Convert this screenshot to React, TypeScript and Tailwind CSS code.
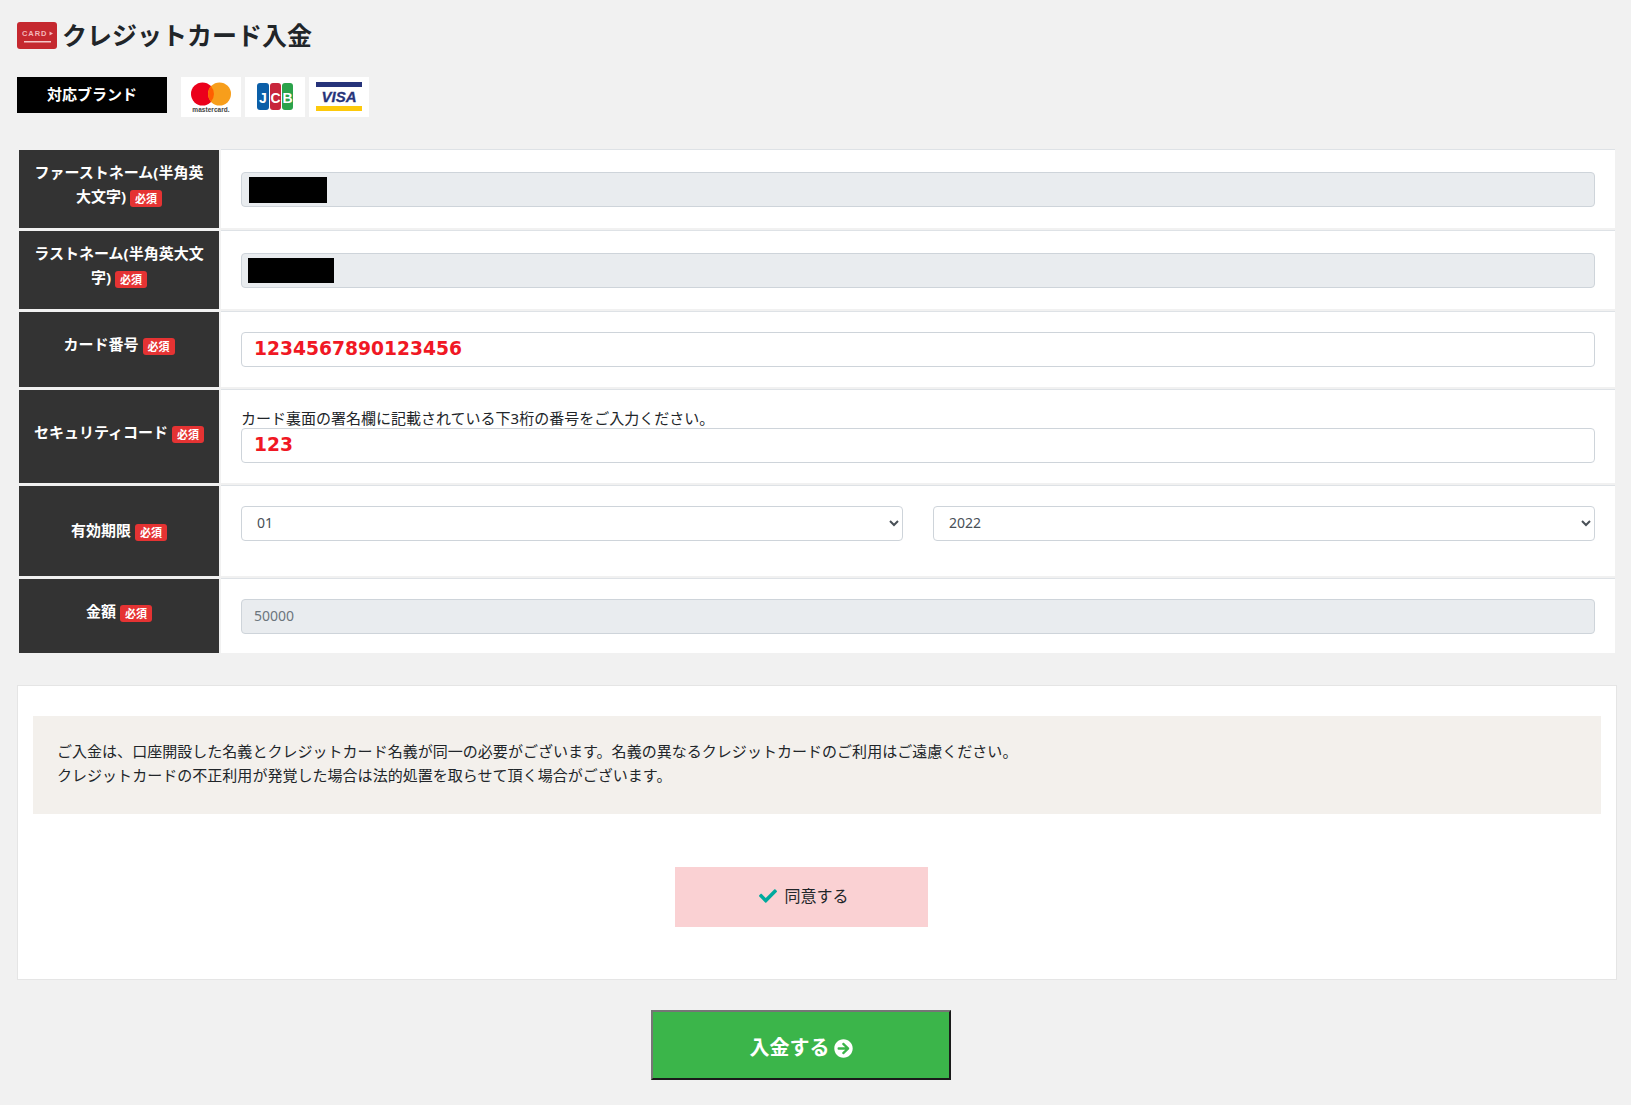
import React from "react";
import { FaCheck, FaArrowCircleRight } from "react-icons/fa";

const font = "font-['Noto_Sans','Noto_Sans_CJK_JP',sans-serif]";

function Badge() {
  return (
    <span className="relative top-[1px] ml-[4px] inline-block h-[17px] w-[32px] rounded-[3px] bg-[#e53333] text-center align-baseline text-[11px] font-bold leading-[17px] text-white">
      必須
    </span>
  );
}

function Row({ label, children, height, top, lift }: { label: React.ReactNode; children: React.ReactNode; height: string; top: string; lift: string }) {
  return (
    <div className={`flex gap-[2px] ${height}`}>
      <div className={`mt-[1px] flex w-[200px] shrink-0 items-center justify-center bg-[#333333] px-[13px] text-center text-[15px] font-bold leading-[24px] text-white ${lift}`}>
        <div>{label}</div>
      </div>
      <div className={`flex-1 border-t-[1px] border-[#dee2e6] bg-white px-[20px] ${top}`}>{children}</div>
    </div>
  );
}

function Field({ value, disabled, cardStyle, mask }: { value?: string; disabled?: boolean; cardStyle?: boolean; mask?: string }) {
  return (
    <div className="relative">
      <input
        readOnly
        value={value ?? ""}
        className={`block h-[35px] w-full rounded-[4px] border border-[#ced4da] px-[12px] pb-[2px] outline-none ${disabled ? "bg-[#e9ecef]" : "bg-white"} ${cardStyle ? "font-['DejaVu_Sans',sans-serif] text-[18.7px] font-bold text-[#f01824]" : "text-[14px] text-[#6c757d]"}`}
      />
      {mask && <span className={`absolute bg-black ${mask}`} />}
    </div>
  );
}

function Select({ value, options }: { value: string; options: string[] }) {
  return (
    <select
      defaultValue={value}
      className="block h-[35px] min-w-0 flex-1 rounded-[4px] border border-[#ced4da] bg-white pb-[2px] pl-[11px] pr-[12px] text-[14px] text-[#495057] outline-none"
    >
      {options.map((o) => (
        <option key={o}>{o}</option>
      ))}
    </select>
  );
}

function Mastercard() {
  return (
    <svg viewBox="0 0 60 40" className="h-[40px] w-[60px]">
      <rect width="60" height="40" fill="#fff" />
      <circle cx="21.5" cy="17" r="11.5" fill="#eb001b" />
      <circle cx="38.5" cy="17" r="11.5" fill="#f79e1b" />
      <path d="M30 9.3a11.5 11.5 0 0 1 0 15.4a11.5 11.5 0 0 1 0-15.4z" fill="#ff5f00" />
      <text x="30" y="34.5" textAnchor="middle" fontSize="6.5" fontWeight="700" letterSpacing="0.05" fill="#444" fontFamily="Liberation Sans, sans-serif">mastercard.</text>
    </svg>
  );
}

function Jcb() {
  return (
    <svg viewBox="0 0 60 40" className="h-[40px] w-[60px]">
      <rect width="60" height="40" fill="#fff" />
      <rect x="12" y="6" width="12" height="27" rx="3" fill="#0b5fa8" />
      <rect x="25" y="6" width="11" height="27" rx="3" fill="#c8263c" />
      <rect x="37" y="6" width="11" height="27" rx="3" fill="#2ba24a" />
      <g fontFamily="Liberation Sans, sans-serif" fontSize="14" fontWeight="700" fill="#fff" textAnchor="middle">
        <text x="18" y="25.5">J</text>
        <text x="30.5" y="25.5">C</text>
        <text x="42.5" y="25.5">B</text>
      </g>
    </svg>
  );
}

function Visa() {
  return (
    <svg viewBox="0 0 60 40" className="h-[40px] w-[60px]">
      <rect width="60" height="40" fill="#fff" />
      <rect x="7" y="5" width="46" height="5" fill="#26337a" />
      <rect x="7" y="29" width="46" height="5" fill="#fdc90b" />
      <text x="30" y="24.5" textAnchor="middle" fontSize="15" fontWeight="700" fontStyle="italic" fill="#26337a" stroke="#26337a" strokeWidth="0.3" fontFamily="Liberation Sans, sans-serif">VISA</text>
    </svg>
  );
}

function CardIcon() {
  return (
    <svg viewBox="0 0 40 27" className="h-[27px] w-[40px]">
      <rect width="40" height="27" rx="3" fill="#c5282f" />
      <text x="5" y="14" fontSize="7.5" fontWeight="700" letterSpacing="0.9" fill="#f4b6b9" fontFamily="Liberation Sans, sans-serif">CARD</text>
      <path d="M32.5 9.5l3.5 2-3.5 2z" fill="#f4b6b9" />
      <rect x="7" y="19" width="27" height="1.5" fill="#f6c6c8" />
    </svg>
  );
}

export default function App() {
  const months = Array.from({ length: 12 }, (_, i) => String(i + 1).padStart(2, "0"));
  const years = ["2022", "2023", "2024", "2025", "2026"];
  return (
    <div className={`min-h-[1105px] bg-[#f1f1f1] px-[17px] pt-[22px] text-[#212529] ${font}`}>
      <div className="flex h-[27px] items-center gap-[5px]">
        <CardIcon />
        <h1 className="text-[25px] font-bold leading-[27px]">クレジットカード入金</h1>
      </div>

      <div className="mt-[28px] flex h-[40px] items-start">
        <div className="flex h-[36px] w-[150px] items-center justify-center bg-black pb-[2px] text-[15px] font-bold text-white">対応ブランド</div>
        <div className="ml-[14px] flex gap-[4px]">
          <Mastercard />
          <Jcb />
          <Visa />
        </div>
      </div>

      <div className="mt-[32px] ml-[2px] mr-[-1px] flex flex-col gap-[2px]">
        <Row height="h-[79px]" lift="pb-[11px]" top="pt-[22px]" label={<>ファーストネーム(半角英大文字)<Badge /></>}>
          <Field disabled mask="left-[8px] top-[5px] h-[26px] w-[78px]" />
        </Row>
        <Row height="h-[79px]" lift="pb-[11px]" top="pt-[22px]" label={<>ラストネーム(半角英大文字)<Badge /></>}>
          <Field disabled mask="left-[7px] top-[5px] h-[25px] w-[86px]" />
        </Row>
        <Row height="h-[76px]" lift="pb-[12px]" top="pt-[20px]" label={<>カード番号<Badge /></>}>
          <Field value="1234567890123456" cardStyle />
        </Row>
        <Row height="h-[94px]" lift="pb-[10px]" top="pt-[19px]" label={<>セキュリティコード<Badge /></>}>
          <p className="text-[15px] leading-[19px]">カード裏面の署名欄に記載されている下3桁の番号をご入力ください。</p>
          <Field value="123" cardStyle />
        </Row>
        <Row height="h-[91px]" lift="pb-[2px]" top="pt-[20px]" label={<>有効期限<Badge /></>}>
          <div className="flex gap-[30px]">
            <Select value="01" options={months} />
            <Select value="2022" options={years} />
          </div>
        </Row>
        <Row height="h-[75px]" lift="pb-[10px]" top="pt-[20px]" label={<>金額<Badge /></>}>
          <Field value="50000" disabled />
        </Row>
      </div>

      <div className="mt-[32px] mr-[-3px] h-[295px] border border-[#e5e5e5] bg-white pt-[30px]">
        <div className="ml-[15px] mr-[15px] h-[98px] bg-[#f3f0ec] pl-[24px] pt-[23px] text-[15px] leading-[24px] tracking-[0.03px]">
          <p>ご入金は、口座開設した名義とクレジットカード名義が同一の必要がございます。名義の異なるクレジットカードのご利用はご遠慮ください。</p>
          <p>クレジットカードの不正利用が発覚した場合は法的処置を取らせて頂く場合がございます。</p>
        </div>
        <div className="ml-[657px] mt-[53px] flex h-[60px] w-[253px] items-center justify-center gap-[7px] bg-[#fad1d3] pb-[3px] pl-[5px] text-[16px]">
          <FaCheck className="h-[18px] w-[18px] text-[#00a99d]" />
          <span>同意する</span>
        </div>
      </div>

      <button className="ml-[634px] mt-[30px] flex h-[70px] w-[300px] items-center justify-center gap-[4px] border-2 border-b-[#1a1a1a] border-l-[#767676] border-r-[#1a1a1a] border-t-[#767676] bg-[#3bb54a] pt-[6px] text-[20px] font-bold text-white">
        <span>入金する</span>
        <FaArrowCircleRight className="h-[19px] w-[19px]" />
      </button>
    </div>
  );
}
